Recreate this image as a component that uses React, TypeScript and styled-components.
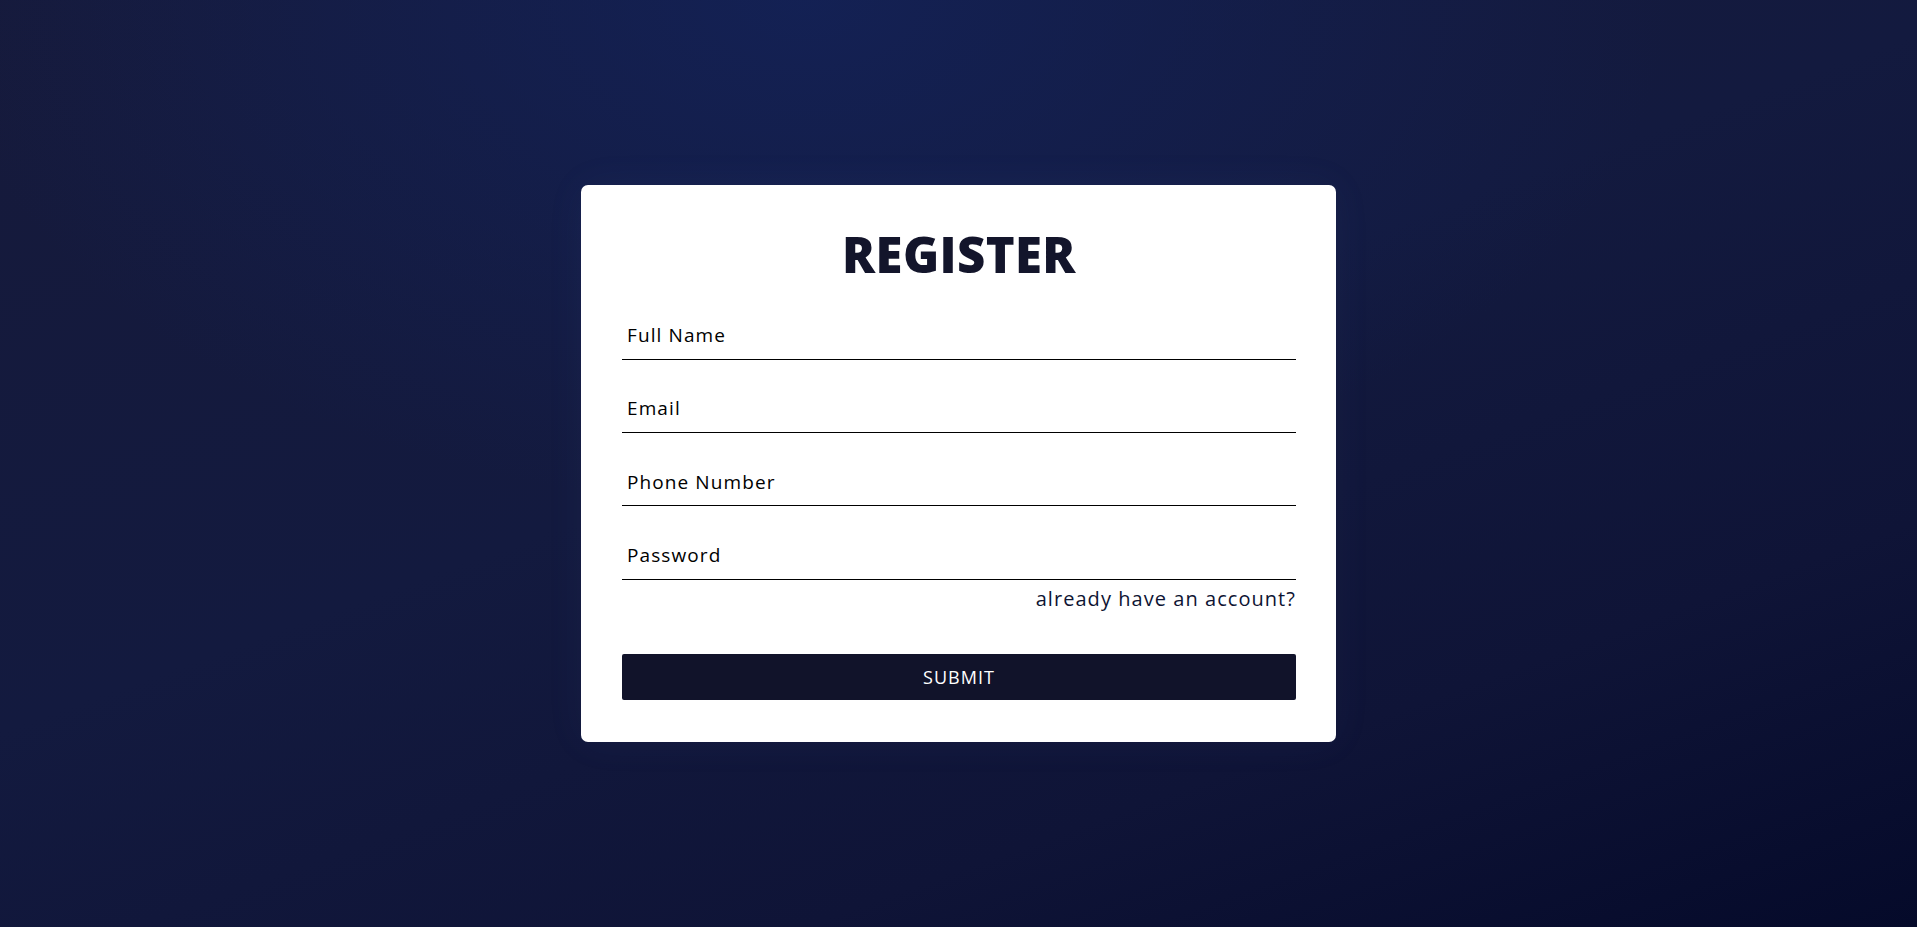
import React from "react";
import styled, { createGlobalStyle } from "styled-components";

const GlobalStyle = createGlobalStyle`
  * { box-sizing: border-box; }
  html, body { margin: 0; padding: 0; height: 100%; }
  body {
    font-family: "Open Sans", "Liberation Sans", sans-serif;
  }
`;

const Page = styled.div`
  min-height: 100vh;
  display: flex;
  align-items: center;
  justify-content: center;
  background:
    radial-gradient(ellipse 45% 55% at 42% 0%, rgba(19, 34, 88, 0.85) 0%, rgba(19, 34, 88, 0) 100%),
    linear-gradient(160deg, #161a3b 0%, #131a3f 45%, #0f1437 75%, #050a2a 100%);
`;

const Card = styled.form`
  width: 755px;
  background: #ffffff;
  border-radius: 7px;
  padding: 45px 40px 42px 41px;
  display: flex;
  flex-direction: column;
  box-shadow: 0 0 40px rgba(120, 130, 200, 0.06);
`;

const Title = styled.h1`
  margin: 0 0 42px;
  font-family: "Open Sans", "Liberation Sans", sans-serif;
  font-weight: 800;
  font-size: 49px;
  line-height: 48px;
  letter-spacing: 0.4px;
  color: #13152b;
  text-align: center;
`;

const Fields = styled.div`
  display: flex;
  flex-direction: column;
  gap: 33.33px;
`;

const Input = styled.input`
  display: block;
  width: 100%;
  height: 40px;
  border: none;
  border-bottom: 1px solid #000;
  outline: none;
  padding: 0 5px 8px;
  background: transparent;
  font-family: "Open Sans", "Liberation Sans", sans-serif;
  font-size: 19px;
  letter-spacing: 1.1px;
  color: #000;
  &::placeholder {
    color: #000;
    opacity: 1;
  }
`;

const AccountLink = styled.a`
  align-self: flex-end;
  margin-top: 5.6px;
  font-size: 20px;
  line-height: 27px;
  letter-spacing: 1.05px;
  color: #0e1433;
  text-decoration: none;
  cursor: pointer;
`;

const Submit = styled.button`
  margin-top: 42.4px;
  height: 46px;
  width: 100%;
  border: none;
  border-radius: 2px;
  background: #11132a;
  color: #ffffff;
  font-family: "Open Sans", "Liberation Sans", sans-serif;
  font-size: 18px;
  letter-spacing: 1px;
  cursor: pointer;
`;

const fields = [
  { name: "fullname", placeholder: "Full Name", type: "text" },
  { name: "email", placeholder: "Email", type: "email" },
  { name: "phone", placeholder: "Phone Number", type: "tel" },
  { name: "password", placeholder: "Password", type: "password" },
];

export default function App() {
  return (
    <>
      <GlobalStyle />
      <Page>
        <Card onSubmit={(e) => e.preventDefault()}>
          <Title>REGISTER</Title>
          <Fields>
            {fields.map((f) => (
              <Input key={f.name} name={f.name} type={f.type} placeholder={f.placeholder} />
            ))}
          </Fields>
          <AccountLink>already have an account?</AccountLink>
          <Submit type="submit">SUBMIT</Submit>
        </Card>
      </Page>
    </>
  );
}
